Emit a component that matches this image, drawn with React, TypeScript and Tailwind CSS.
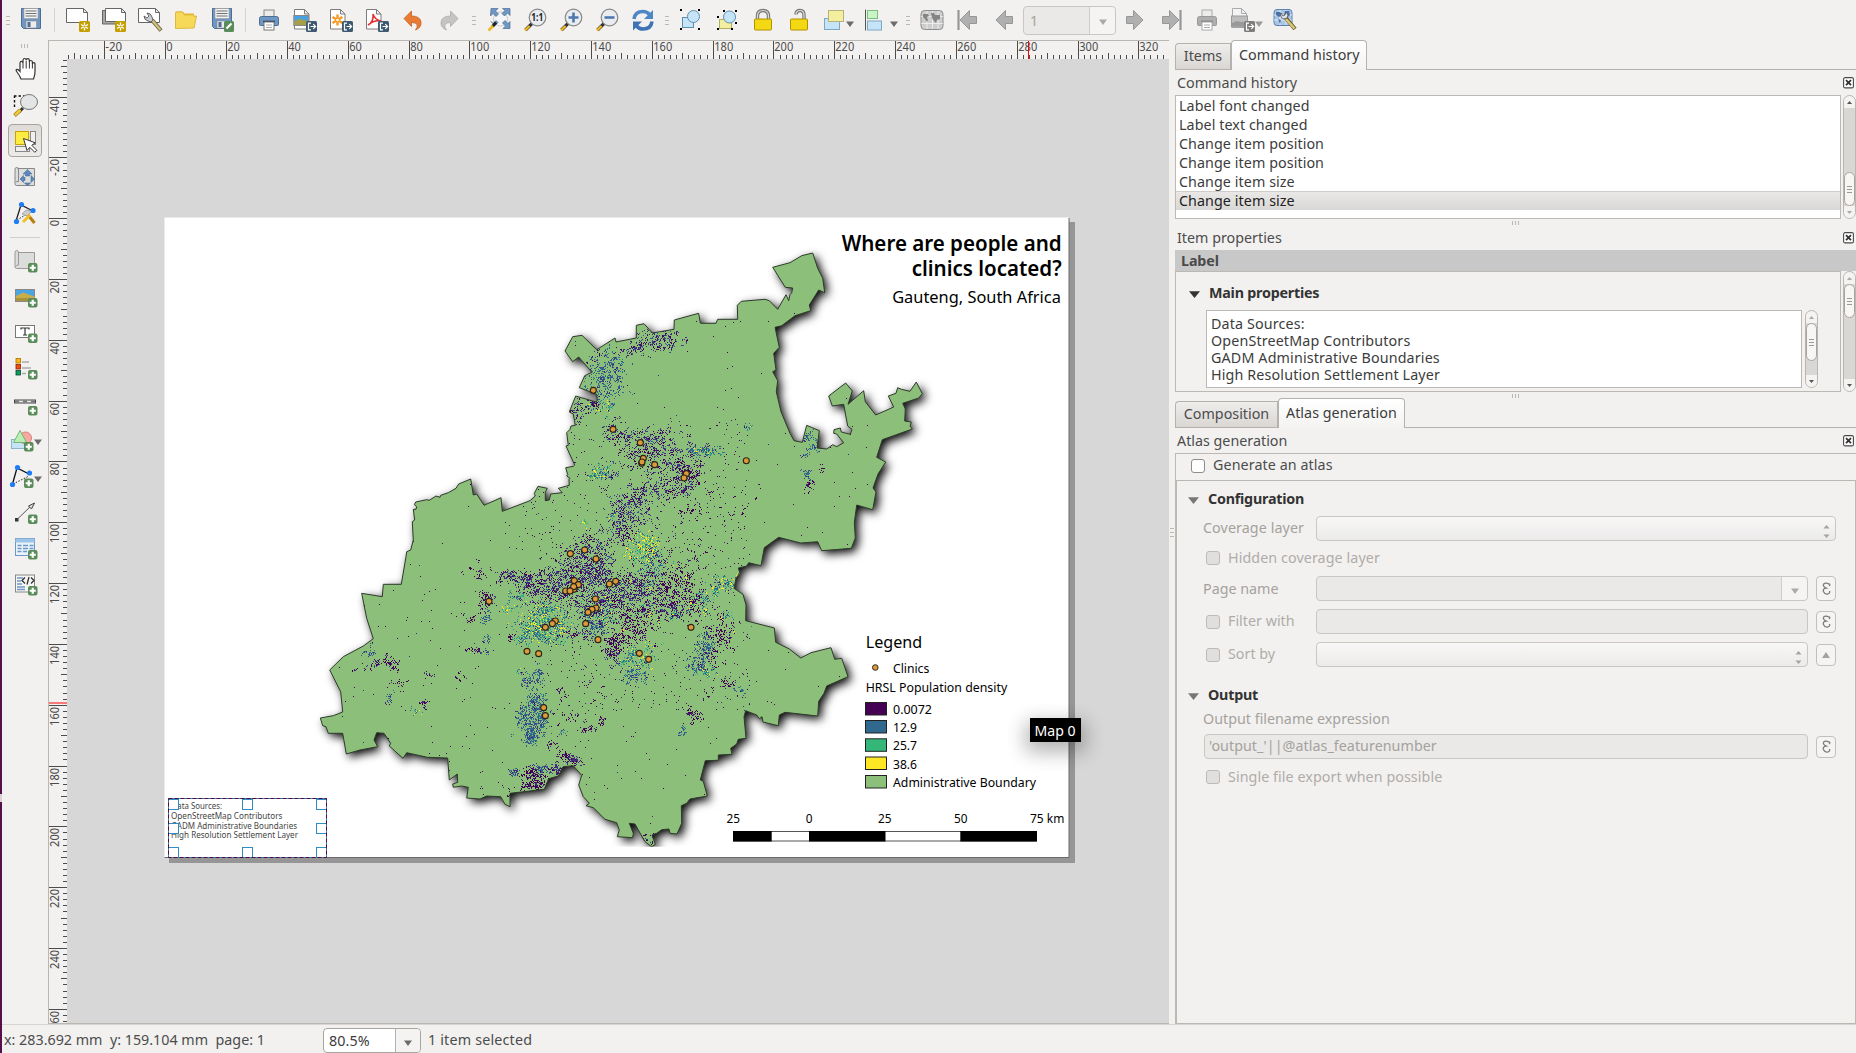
import React from "react";

/* ---------- helpers ---------- */
const pts = (ox: number, oy: number, s: string) =>
  s
    .trim()
    .split(/\s+/)
    .map((p) => {
      const [x, y] = p.split(",").map(Number);
      return `${(ox + x / 3).toFixed(1)},${(oy + y / 3).toFixed(1)}`;
    })
    .join(" ");

const BOUNDARY = [
  pts(310, 240, "302,930 310,900 307,845 314,840 310,808 318,808 320,800 313,794 317,786 350,779 358,781 378,768 390,772 392,766 415,758 438,745 446,732 482,717 490,765 500,762 522,796 573,773 577,814 660,782 676,768 673,760 684,739 712,745 706,757 706,782 718,780 722,762 757,758 745,745 778,736 777,718 780,715 770,708 773,704 767,683 790,679 794,675 768,618 775,616 770,578 780,568 783,558 796,556 790,522 778,516 797,468 858,486 862,482 860,463 808,443 824,407 846,397 806,351 788,365 765,333 788,290 816,286 860,329 915,294 918,306 979,294 979,256 1002,251 1027,279 1092,268 1093,240 1166,220 1171,249"),
  pts(680, 220, "62,310 108,310 113,298 173,298 172,256 184,244 255,238 268,242 293,268 318,224 326,242 330,224 335,218 338,204 316,202 278,142 330,128 365,107 398,99 413,145 428,175 434,218 416,210 388,255 392,272 345,287 305,317 285,322 298,382 281,400 288,450 278,455 293,482 289,515 303,575 330,640 342,662 367,667 380,616 418,632 411,684 440,687 458,674 470,680 491,668 470,642 461,640 462,629 481,624 484,636 511,643 516,628 503,618 491,553 457,558 446,528 497,489 517,513 504,553 551,512 556,545 587,585 641,561 625,528 648,520 653,503 664,508 690,514 709,486 727,521 716,534 668,550 676,567 674,603 694,606 690,618 697,627 607,659 590,712 617,726 594,762 579,804 588,816 578,869 530,855 523,908 526,954 514,985 425,992 413,965 362,969 296,952 253,983 243,1037 206,1028 200,1038 175,1044"),
  pts(660, 540, "235,84 240,100 228,115 222,145 249,163 258,195 257,242 343,264 347,307 388,327 422,354 453,338 513,323 524,358 545,355 564,410 500,438 492,460 476,484 473,528 375,517 358,525 355,557 309,546 306,530 298,536 290,525 257,512 252,530 258,595 235,598 230,612 212,625 216,643 175,645 175,661 136,662 121,720 130,724 142,768 90,777 80,790 64,797 65,850 51,882 30,880 27,867 5,869"),
  pts(310, 540, "1040,880 1026,885 1036,913 1025,920 1005,905 985,870 975,852 958,850 970,880 968,893 922,890 928,870 920,848 885,838 850,803 828,797 838,790 820,770 806,735 815,706 790,677 760,680 745,708 716,716 703,748 600,760 600,800 585,793 572,770 530,768 510,777 470,774 475,742 455,738 430,742 428,732 443,727 442,702 418,720 413,654 352,652 290,638 279,655 238,618 242,610 222,580 200,578 192,600 203,620 150,630 109,642 98,580 55,580 48,560 38,557 31,534 70,527 98,516 92,455 59,390 100,350 160,318 190,296 170,235 155,160 217,170 220,133 274,133 288,50 290,35"),
].join(" ");

const CLINICS: [number, number][] = [
  ...([[850, 451], [909, 568], [991, 608], [1000, 655], [995, 670], [996, 666], [1034, 674], [1129, 701], [1122, 714]].map(([x, y]) => [310 + x / 3, 240 + y / 3]) as [number, number][]),
  [746.3, 460.7],
  ...([[781, 41], [824, 30], [858, 57], [793, 122], [805, 134], [792, 148], [767, 153], [791, 140], [780, 153], [917, 124], [898, 132], [856, 177], [858, 204], [846, 208], [834, 217], [827, 251], [864, 299], [736, 243], [727, 251], [706, 262], [651, 334], [686, 341], [537, 184], [988, 340], [1016, 358], [701, 503], [706, 527], [1143, 262]].map(([x, y]) => [310 + x / 3, 540 + y / 3]) as [number, number][]),
];

const COLORS = ["#440154", "#46287c", "#3b528b", "#2c728e", "#21918c", "#35b779", "#fde725"];
const MIX: Record<string, number[]> = {
  P: [0, 0, 0, 0, 1],
  Q: [0, 0, 1, 1, 1, 2],
  B: [1, 2, 2, 3, 3],
  T: [2, 2, 3, 3, 4, 4, 5, 6],
  Y: [3, 4, 5, 5, 6, 6, 6],
};
/* centre x, centre y, radius x, radius y, cell count, palette */
const CLUSTERS: [number, number, number, number, number, string][] = [
  [661, 340, 17, 9, 190, "Q"], [628, 351, 9, 4, 40, "Q"], [635, 347, 8, 3, 40, "Q"], [600, 374, 14, 18, 180, "B"], [612, 376, 12, 20, 170, "B"], [602, 404, 10, 8, 60, "T"],
  [578, 410, 8, 10, 60, "Q"], [592, 404, 5, 6, 40, "P"], [592, 355, 10, 6, 12, "P"], [612, 430, 8, 9, 60, "Q"], [630, 437, 13, 7, 80, "Q"], [655, 440, 16, 10, 130, "Q"],
  [640, 455, 20, 12, 110, "P"], [665, 458, 22, 15, 160, "Q"], [680, 474, 20, 14, 190, "Q"], [672, 490, 18, 6, 110, "Q"], [690, 468, 8, 12, 60, "P"],
  [699, 450, 17, 4, 90, "B"], [707, 451, 11, 6, 40, "T"], [602, 471, 9, 5, 60, "T"], [594, 475, 7, 3, 30, "T"], [613, 475, 6, 4, 30, "Q"],
  [622, 506, 12, 12, 140, "Q"], [640, 498, 14, 13, 150, "Q"], [635, 520, 16, 8, 70, "Q"], [615, 532, 8, 12, 80, "Q"], [627, 535, 7, 9, 40, "P"],
  [646, 542, 9, 8, 110, "Y"], [640, 552, 12, 9, 110, "Y"], [583, 545, 4, 6, 30, "Q"], [584, 523, 3, 3, 12, "Y"], [611, 515, 4, 3, 14, "T"],
  [585, 560, 16, 18, 220, "Q"], [565, 578, 22, 16, 300, "Q"], [545, 590, 20, 13, 220, "Q"], [595, 578, 22, 16, 320, "Q"], [598, 562, 12, 20, 120, "Q"],
  [615, 592, 22, 16, 260, "Q"], [635, 590, 22, 15, 240, "Q"], [650, 565, 10, 15, 140, "B"], [655, 590, 22, 18, 160, "P"], [675, 580, 20, 14, 140, "P"],
  [668, 608, 20, 9, 180, "Q"], [690, 600, 16, 16, 140, "P"], [585, 605, 18, 12, 150, "Q"], [600, 612, 16, 12, 140, "Q"], [640, 620, 20, 14, 110, "P"],
  [508, 575, 9, 5, 60, "Q"], [521, 578, 8, 4, 50, "Q"], [530, 583, 12, 9, 90, "Q"], [634, 632, 8, 6, 50, "P"], [625, 618, 12, 8, 60, "P"],
  [530, 628, 14, 11, 210, "T"], [545, 620, 14, 11, 180, "T"], [556, 628, 12, 12, 130, "T"], [540, 635, 18, 6, 90, "T"], [545, 608, 12, 4, 40, "T"],
  [515, 598, 8, 6, 35, "T"], [508, 608, 8, 3, 22, "Y"], [595, 628, 10, 6, 80, "B"], [582, 634, 18, 5, 80, "Q"], [598, 615, 12, 5, 50, "T"],
  [615, 645, 8, 9, 90, "P"], [612, 655, 6, 8, 60, "Q"], [620, 640, 8, 6, 40, "P"], [630, 660, 8, 10, 90, "T"], [634, 674, 11, 7, 90, "B"], [643, 658, 8, 6, 40, "T"], [650, 648, 4, 4, 14, "Y"],
  [704, 645, 7, 8, 80, "B"], [696, 664, 7, 8, 70, "B"], [706, 672, 7, 5, 50, "T"], [704, 655, 6, 9, 40, "B"], [717, 627, 12, 9, 70, "P"], [724, 640, 7, 6, 50, "P"], [713, 655, 8, 10, 36, "P"],
  [725, 583, 9, 6, 80, "T"], [715, 590, 5, 5, 36, "T"], [704, 597, 8, 4, 36, "T"], [705, 608, 4, 4, 16, "T"], [673, 617, 4, 4, 20, "T"], [726, 615, 5, 4, 14, "T"],
  [728, 685, 6, 3, 26, "P"], [738, 690, 5, 3, 14, "B"], [690, 711, 4, 4, 26, "P"], [697, 718, 4, 5, 26, "P"], [707, 694, 5, 3, 10, "P"],
  [681, 730, 4, 4, 22, "B"], [535, 700, 7, 7, 110, "B"], [527, 715, 7, 11, 130, "B"], [541, 718, 7, 12, 150, "B"], [531, 736, 6, 6, 110, "B"], [530, 724, 11, 9, 90, "B"],
  [531, 680, 8, 5, 60, "B"], [538, 675, 4, 8, 30, "B"], [522, 672, 4, 3, 12, "T"], [485, 602, 5, 8, 60, "P"], [489, 598, 4, 4, 26, "Q"],
  [487, 617, 4, 8, 34, "B"], [487, 639, 4, 2, 16, "B"], [370, 653, 5, 4, 26, "B"], [373, 663, 5, 3, 28, "Q"], [388, 658, 4, 6, 24, "P"], [393, 665, 5, 4, 26, "P"], [359, 669, 4, 2, 8, "P"],
  [388, 697, 4, 5, 18, "B"], [424, 703, 3, 5, 26, "P"], [416, 711, 4, 3, 14, "T"], [510, 637, 3, 3, 18, "P"], [473, 650, 5, 3, 20, "P"], [484, 651, 5, 2, 12, "B"],
  [428, 673, 6, 3, 10, "Q"], [398, 684, 7, 4, 14, "P"], [468, 618, 8, 4, 16, "P"], [480, 574, 6, 5, 20, "P"], [472, 566, 8, 5, 10, "P"], [460, 675, 8, 4, 12, "P"],
  [532, 774, 8, 7, 110, "P"], [533, 784, 9, 5, 110, "P"], [514, 772, 4, 3, 36, "B"], [541, 768, 5, 4, 44, "B"], [556, 768, 5, 5, 60, "Q"], [564, 755, 6, 5, 50, "P"], [552, 745, 4, 3, 16, "P"],
  [575, 760, 5, 4, 56, "Q"], [588, 728, 6, 4, 32, "P"], [600, 722, 4, 3, 16, "P"], [564, 731, 3, 3, 10, "B"], [559, 693, 4, 4, 16, "P"], [648, 837, 8, 5, 24, "P"],
  [808, 436, 5, 4, 34, "B"], [813, 446, 4, 4, 28, "B"], [803, 454, 4, 2, 12, "B"], [806, 473, 3, 4, 28, "B"], [810, 484, 6, 4, 28, "P"], [822, 470, 4, 2, 6, "P"],
  [746, 427, 4, 3, 12, "T"], [640, 610, 80, 40, 100, "Y"], [540, 790, 40, 7, 50, "P"], [560, 712, 22, 18, 30, "P"], [595, 690, 14, 16, 20, "P"], [686, 510, 8, 5, 20, "P"], [710, 510, 30, 18, 60, "P"], [670, 556, 40, 14, 70, "P"],
];
const cells = (() => {
  let seed = 20117;
  const rnd = () => {
    seed = (seed * 1664525 + 1013904223) >>> 0;
    return seed / 4294967296;
  };
  const gauss = () => (rnd() + rnd() + rnd() - 1.5) * 1.3;
  const out = COLORS.map(() => "");
  const put = (x: number, y: number, c: number) => {
    out[c] += `M${Math.round(x)} ${Math.round(y)}h1v1h-1z`;
  };
  for (const [cx, cy, rx, ry, n, mix] of CLUSTERS) {
    const m = MIX[mix];
    let left = Math.round(n * 1.45);
    while (left > 0) {
      let x = cx + gauss() * rx;
      let y = cy + gauss() * ry;
      const run = 1 + Math.floor(rnd() * 4);
      const c = m[Math.floor(rnd() * m.length)];
      for (let k = 0; k < run; k++) {
        put(x, y, rnd() < 0.6 ? c : m[Math.floor(rnd() * m.length)]);
        x += Math.round(rnd() * 4 - 2);
        y += Math.round(rnd() * 4 - 2);
      }
      left -= run;
    }
  }
  for (let i = 0; i < 700; i++) put(330 + rnd() * 540, 310 + rnd() * 520, rnd() < 0.9 ? 0 : 1);
  for (let i = 0; i < 900; i++) put(520 + rnd() * 230, 420 + rnd() * 290, rnd() < 0.8 ? 0 : 1);
  return out;
})();

/* ---------- rulers ---------- */
const MM = 3.0407;
const HRuler = () => {
  const ticks: React.ReactNode[] = [];
  for (let v = -32; v <= 328; v += 2) {
    const x = Math.round(165.3 + v * MM) - 49 + 0.5;
    if (x < 18 || x > 1119) continue;
    const major = v % 20 === 0;
    ticks.push(<path key={v} d={`M${x} ${major ? 0 : v % 10 === 0 ? 12 : 14}V18`} stroke="#4c4c4c" />);
    if (major)
      ticks.push(
        <text key={"t" + v} x={x + 0.8} y={10.2} fontSize="12" fill="#4c4c4c" textLength={String(v).length * 6.3 - (v < 0 ? 2 : 0)} lengthAdjust="spacingAndGlyphs">
          {v}
        </text>
      );
  }
  return (
    <svg className="block h-[18px] w-[1119px] shrink-0 overflow-visible" viewBox="0 0 1119 18">
      {ticks}
      <path d="M979.5 0V18" stroke="#f00" />
    </svg>
  );
};
const VRuler = () => {
  const ticks: React.ReactNode[] = [];
  for (let v = -52; v <= 264; v += 2) {
    const y = Math.round(218.2 + v * MM) - 59 + 0.5;
    if (y < -2 || y > 964) continue;
    const major = v % 20 === 0;
    ticks.push(<path key={v} d={`M${major ? 0 : v % 10 === 0 ? 12 : 14} ${y}H18`} stroke="#4c4c4c" />);
    if (major)
      ticks.push(
        <text key={"t" + v} transform={`translate(10 ${y + 1.5}) rotate(-90)`} textAnchor="end" fontSize="12" fill="#4c4c4c" textLength={String(v).length * 6.3 - (v < 0 ? 2 : 0)} lengthAdjust="spacingAndGlyphs">
          {v}
        </text>
      );
  }
  return (
    <svg className="block h-[964px] w-[18px] shrink-0 overflow-hidden" viewBox="0 0 18 964">
      {ticks}
      <path d="M0 644H18" stroke="#f00" />
    </svg>
  );
};

/* ---------- composition canvas ---------- */
const T = ({ x, y, w, s, children, weight = 400, fill = "#000" }: { x: number; y: number; w: number; s: number; children: string; weight?: number; fill?: string }) => (
  <text x={x} y={y} fontSize={s} textLength={w} lengthAdjust="spacingAndGlyphs" fontWeight={weight} fill={fill}>
    {children}
  </text>
);
const LEGEND: [number, string, string, number][] = [
  [702.5, "#440154", "0.0072", 39],
  [720.5, "#31688e", "12.9", 24],
  [738.8, "#35b779", "25.7", 24],
  [757, "#fde725", "38.6", 24],
  [775.5, "#8cc07a", "Administrative Boundary", 143],
];
const Canvas = () => (
  <svg className="block h-[964px] w-[1102px] bg-[#d7d7d7]" viewBox="67 59 1102 964">
    <defs>
      <clipPath id="mapframe"><rect x="165" y="218" width="904" height="628.7" /></clipPath>
      <clipPath id="land"><polygon points={BOUNDARY} /></clipPath>
      <filter id="shadow" x="-10%" y="-10%" width="120%" height="120%" colorInterpolationFilters="sRGB">
        <feDropShadow dx="3.5" dy="3.5" stdDeviation="5" floodColor="#000" floodOpacity="1" />
      </filter>
      <filter id="tip" x="-60%" y="-60%" width="220%" height="320%"><feGaussianBlur stdDeviation="10" /></filter>
    </defs>
    <rect x="169" y="222" width="906" height="641" fill="#969696" />
    <rect x="164.5" y="217.5" width="904.5" height="640" fill="#fff" />
    <path d="M164.5 857.5H1069V218" fill="none" stroke="#6a6a6a" />
    <g clipPath="url(#mapframe)">
      <polygon points={BOUNDARY} fill="#8cc07a" filter="url(#shadow)" />
      <g clipPath="url(#land)" shapeRendering="crispEdges">
        {cells.map((d, i) => <path key={i} d={d} fill={COLORS[i]} />)}
      </g>
      <polygon points={BOUNDARY} fill="none" stroke="#2f3a2c" strokeWidth="1" strokeLinejoin="round" />
      {CLINICS.map(([x, y], i) => <circle key={i} cx={x} cy={y} r="3" fill="#dc9a3c" stroke="#2b2417" strokeWidth="1.1" />)}
    </g>
    <T x={841.7} y={250.5} w={220} s={21} weight={600}>Where are people and</T>
    <T x={911.7} y={275.7} w={150} s={21} weight={600}>clinics located?</T>
    <T x={892.2} y={303} w={168.7} s={16.5}>Gauteng, South Africa</T>
    <T x={865.7} y={648.3} w={56.5} s={17}>Legend</T>
    <circle cx="875.3" cy="667.5" r="2.8" fill="#dc9a3c" stroke="#2b2417" />
    <T x={893} y={673.3} w={36.3} s={12.6}>Clinics</T>
    <T x={865.7} y={692.3} w={141.5} s={12.6}>HRSL Population density</T>
    {LEGEND.map(([y, c, label, w]) => (
      <g key={label}>
        <rect x="865.5" y={y} width="21" height="12.5" fill={c} stroke="#222" />
        <T x={893} y={y + 11.5} w={w} s={12.6}>{label}</T>
      </g>
    ))}
    <T x={726.5} y={823} w={13.5} s={12.6}>25</T>
    <T x={805.7} y={823} w={6.8} s={12.6}>0</T>
    <T x={878} y={823} w={13.5} s={12.6}>25</T>
    <T x={954} y={823} w={13.5} s={12.6}>50</T>
    <T x={1030} y={823} w={34.3} s={12.6}>75 km</T>
    <rect x="733.5" y="831.5" width="303" height="9.5" fill="#fff" stroke="#555" />
    <path d="M733 831h38.7v10.5H733zM809 831h76.5v10.5H809zM960.3 831H1037v10.5h-76.7z" fill="#000" />

    <T x={171.5} y={808.7} w={50.5} s={8.8} fill="#444">Data Sources:</T>
    <T x={171} y={819} w={111.5} s={8.8} fill="#444">OpenStreetMap Contributors</T>
    <T x={171} y={828.8} w={126} s={8.8} fill="#444">GADM Administrative Boundaries</T>
    <T x={171} y={838} w={127} s={8.8} fill="#444">High Resolution Settlement Layer</T>
    {[168.5, 242.5, 316.5].map((x) => [799.5, 823.5, 847.5].map((y) => (x === 242.5 && y === 823.5 ? null : (
      <rect key={x + "-" + y} x={x} y={y} width="10" height="10" fill="#fff" stroke="#308cc6" />
    ))))}
    <rect x="168.5" y="798.5" width="158" height="59" fill="none" stroke="#308cc6" />
    <rect x="168.5" y="798.5" width="158" height="59" fill="none" stroke="#5a0838" strokeDasharray="4 2" />

    <rect x="1026" y="722" width="59" height="30" fill="#000" opacity=".3" filter="url(#tip)" />
    <rect x="1030" y="718" width="51" height="24" fill="#000" />
    <T x={1034.5} y={735.5} w={41} s={14.3} fill="#fff">Map 0</T>
  </svg>
);

/* ---------- icons ---------- */
const S = ({ children, w = 24, h = 24 }: { children: React.ReactNode; w?: number; h?: number }) => (
  <svg width={w} height={h} viewBox={`0 0 ${w} ${h}`} className="block shrink-0 overflow-visible" fill="none">{children}</svg>
);
const Slot = ({ children }: { children: React.ReactNode }) => <div className="flex h-6 w-9 shrink-0 items-center justify-center">{children}</div>;
const Down = ({ c = "#6b6b6b" }: { c?: string }) => <svg width="8" height="6" viewBox="0 0 8 6" className="block shrink-0"><path d="M0 .5h8L4 6z" fill={c} /></svg>;
const Sep = () => <div className="flex h-6 w-[11px] shrink-0 justify-center"><div className="w-px bg-[#d6d3d0]" /></div>;
const Grip = ({ w }: { w: "a" | "b" | "c" }) => (
  <div className={`flex h-6 shrink-0 flex-col items-center justify-center gap-[3px] ${w === "a" ? "w-[14px]" : w === "b" ? "w-3" : "w-[13px]"}`}>
    <i className="h-px w-[4px] bg-[#bbb8b4]" /><i className="h-px w-[4px] bg-[#bbb8b4]" /><i className="h-px w-[4px] bg-[#bbb8b4]" />
  </div>
);
const Star = () => (
  <g><rect x="13" y="13" width="11" height="11" rx="1.5" fill="#c3a000" /><path d="M18.5 14.5v8M15 16.5l7 4M22 16.5l-7 4" stroke="#fff" strokeWidth="1.3" /><circle cx="18.5" cy="18.5" r="1" fill="#c3a000" /></g>
);
const Out = ({ c = "#3d5a70" }: { c?: string }) => (
  <g><rect x="13" y="13" width="11" height="11" rx="1.5" fill={c} /><path d="M18 15.2h-2.5v6.6H18M17.5 18.5h5M20.3 16.2l2.3 2.3-2.3 2.3" stroke="#fff" strokeWidth="1.2" /></g>
);
const Plus = ({ x = 12, y = 12 }: { x?: number; y?: number }) => (
  <g transform={`translate(${x} ${y})`}><rect width="9.5" height="9.5" rx="2" fill="#5a8c5a" /><path d="M4.75 1.7v6.1M1.7 4.75h6.1" stroke="#fff" strokeWidth="2.2" /></g>
);
const Floppy = () => (
  <g><path d="M2.5 1.5h19v20h-17l-2-2z" fill="#6f97c4" stroke="#4d6d93" /><rect x="5" y="1.5" width="14" height="10" fill="#f2f2f2" stroke="#999" strokeWidth=".6" /><path d="M6.5 4h11M6.5 6.500h11M6.500 9h11" stroke="#6f6f6f" /><rect x="7" y="14" width="10.500" height="7" fill="#ececec" stroke="#888" strokeWidth=".6" /><rect x="8.500" y="15" width="3" height="5" fill="#4d6d93" /></g>
);
const PageI = () => <path d="M1.500 1.500h10l4.500 4.500v15H1.500zM11.500 1.500v4.500H16" fill="#fff" stroke="#7c7c7c" />;
const Printer = ({ g = false }) => (
  <g><rect x="7" y="2" width="10" height="9" fill="#ececec" stroke={g ? "#aaa" : "#8a8a8a"} /><path d="M2.500 10.500q0-2 2-2h15q2 0 2 2v6q0 1-1 1h-17q-1 0-1-1z" fill={g ? "#aeaeae" : "#6f97c4"} stroke={g ? "#999" : "#4d6d93"} /><path d="M6 13.500h12" stroke={g ? "#777" : "#2b3f58"} strokeWidth="1.600" /><rect x="7" y="14" width="10" height="8" fill="#fff" stroke={g ? "#aaa" : "#777"} /><path d="M9 17h6M9 19.500h6" stroke="#aaa" strokeWidth="1" /></g>
);
const Mag = ({ children }: { children?: React.ReactNode }) => (
  <g><path d="M9 15.500l-6.500 6.500" stroke="#333" strokeWidth="3.200" /><path d="M6.500 18l-4.500 4.500" stroke="#f0b920" strokeWidth="2.400" /><circle cx="14.500" cy="9.500" r="8.300" fill="#e9edf0" stroke="#888" strokeWidth="1.200" />{children}</g>
);
const Corners = () => <g fill="#000">{[[1, 1], [19, 1], [1, 20], [19, 20]].map(([x, y], i) => <rect key={i} x={x} y={y} width="2" height="2" />)}</g>;
const LockB = ({ open = false }) => (
  <g><path d={open ? "M9 6.500q0-4 4-4t4 4.500v6" : "M6.500 13V8q0-5.500 5.500-5.500T17.500 8v5"} stroke="#777" strokeWidth="3.400" /><path d={open ? "M9 6.500q0-4 4-4t4 4.500v6" : "M6.500 13V8q0-5.500 5.500-5.500T17.500 8v5"} stroke="#ddd" strokeWidth="1.200" /><rect x="3.500" y="11" width="17" height="11" rx="1" fill="#f2d914" stroke="#b39200" /></g>
);
const Arr = ({ dir, bar = false }: { dir: 1 | -1; bar?: boolean }) => (
  <g transform={dir === 1 ? "" : "translate(24 0) scale(-1 1)"}><path d="M3.500 8.500h7V2.500l9.500 9.500-9.500 9.500V15.500h-7z" fill="#b0b0b0" stroke="#979797" />{bar && <path d="M21.500 2v20" stroke="#979797" strokeWidth="2.200" />}</g>
);
const GridI = () => (
  <g><rect x="1" y="2.500" width="22" height="19" rx="3.500" fill="#cdcdcd" stroke="#8d8d8d" /><path d="M1 8.500h22M1 15.500h22M7 3v18M12.500 3v18M18 3v18" stroke="#fff" opacity=".6" /><path d="M3 6h5l1 2-2 1 1 3-1 2-2-3-2-2zM11 5h3l1 2h5v4l-3 1-1 3-2-2-2-3z" fill="#858585" /></g>
);

const TopBar = () => (
  <div className="flex h-10 shrink-0 items-center pl-[2px]">
    <div className="flex w-[11px] flex-col items-center gap-[3px]"><i className="h-px w-[4px] bg-[#bbb8b4]" /><i className="h-px w-[4px] bg-[#bbb8b4]" /><i className="h-px w-[4px] bg-[#bbb8b4]" /></div>
    <Slot><S><g transform="translate(0 -1)"><Floppy /></g></S></Slot>
    <Sep />
    <Slot><S><path d="M.5.5h17l4 4v10H.5zM17.5.5v4h4" fill="#fff" stroke="#666" /><Star /></S></Slot>
    <Slot><S><path d="M.5 2.500h4v10h13v3.500H.5z" fill="#a9a69f" stroke="#666" /><path d="M3.500.5h16l4 4v9h-20zM19.500.5v4h4" fill="#fff" stroke="#666" /><Star /></S></Slot>
    <Slot><S><path d="M.5.5h17l4 4v10H.5zM17.5.5v4h4" fill="#fff" stroke="#666" /><path d="M14 12l9 10.500" stroke="#66603f" strokeWidth="4" /><path d="M14 12l8.500 10" stroke="#cfc27c" strokeWidth="2.400" /><path d="M6 8q0 4 4 5l3 1 2-2-1-3q-1-4-5-4l2 3-2 2z" fill="#c9cdd1" stroke="#555" strokeWidth=".9" /></S></Slot>
    <Slot><S><path d="M1.500 3.500h7l2 2H20v4H1.500z" fill="#e3b52c" /><path d="M1.500 20.500V5l1-1h6l2 3H20v1.500l2.500-.5L20 20z" fill="#f7d95a" stroke="#e0b93a" /></S></Slot>
    <Slot><S><g transform="translate(0 -1)"><Floppy /></g><rect x="14" y="13" width="10" height="11" rx="1.500" fill="#5a8c5a" /><path d="M16.500 20.500l5-5" stroke="#fff" strokeWidth="2.200" /></S></Slot>
    <Sep />
    <Slot><S><Printer /></S></Slot>
    <Slot><S><PageI /><rect x=".8" y="7.500" width="14.500" height="10" fill="#4aa3e0" stroke="#888" /><path d="M1.300 13l5-2 9 2v4h-14z" fill="#a59f4c" /><Out /></S></Slot>
    <Slot><S><PageI /><path d="M8.500 6.500v11M3.500 9l10 6M13.500 9l-10 6" stroke="#f59a23" strokeWidth="2.400" /><circle cx="8.500" cy="12" r="1.300" fill="#fff" /><Out /></S></Slot>
    <Slot><S><PageI /><path d="M3 17q6-3 5-11 2 6 8 7-7-1-13 4z" stroke="#e03030" strokeWidth="1.500" /><Out /></S></Slot>
    <Slot><S><path d="M3 10.500l7.500-7.500v5q9 0 9.500 6.500.5 5-5.500 7.500 2.500-3 1.500-5.500-1-2-5.500-2v4z" fill="#e97b35" stroke="#c05f1e" strokeWidth=".8" /></S></Slot>
    <Slot><S><path d="M21 10.500l-7.500-7.500v5Q4.500 8 4 14.500q-.5 5 5.500 7.500Q7 19 8 16.500q1-2 5.500-2v4z" fill="#c4c4c4" stroke="#aaa" strokeWidth=".8" /></S></Slot>
    <Grip w="a" />
    <Slot><S><circle cx="13.500" cy="11" r="7" fill="#f4f5f6" stroke="#ccc" /><g fill="#6f97c4" stroke="#4d6d93" strokeWidth=".7"><path d="M4 .5h7L8.500 3l3 3-2.500 2.500-3-3L3.500 8zM23 .5v7l-2.500-2.500-3 3L15 5.500l3-3L15.500.5zM23 20.500h-7l2.500-2.500-3-3 2.500-2.500 3 3 2-2zM4 13.500l2 2 3-3 2 2-3 3z" /></g><path d="M9 14.500l-3.500 4" stroke="#222" strokeWidth="3" /><path d="M6 18l-4.500 4.500" stroke="#f0b920" strokeWidth="2.600" /></S></Slot>
    <Slot><S><Mag><text x="14.300" y="13.300" textAnchor="middle" fontSize="10" fontWeight="700" fill="#222" textLength="12" lengthAdjust="spacingAndGlyphs">1:1</text></Mag></S></Slot>
    <Slot><S><Mag><path d="M14.500 4.500v10M9.500 9.500h10" stroke="#4d79b0" strokeWidth="2.600" /></Mag></S></Slot>
    <Slot><S><Mag><path d="M9.500 9.500h10" stroke="#4d79b0" strokeWidth="2.600" /></Mag></S></Slot>
    <Slot><S><path d="M3 11Q4 3.500 12 3.500q4 0 6.500 3" stroke="#4f86c6" strokeWidth="3.600" /><path d="M22 2v9h-9z" fill="#4f86c6" /><path d="M21 13.500Q20 21 12 21q-4 0-6.500-3" stroke="#3f74b4" strokeWidth="3.600" /><path d="M2 22.500v-9h9z" fill="#3f74b4" /></S></Slot>
    <Grip w="b" />
    <Slot><S><rect x="3.500" y="9.500" width="11" height="10" fill="#c6e4f7" stroke="#5d8fb0" /><circle cx="14.500" cy="8.500" r="6" fill="#c6e4f7" stroke="#5d8fb0" /><Corners /></S></Slot>
    <Slot><S><rect x="4.500" y="11.500" width="12" height="9" fill="#f3ef9e" stroke="#b5b060" /><circle cx="14.500" cy="9" r="6" fill="#c6e4f7" stroke="#5d8fb0" /><g fill="#000"><rect x="8" y="2" width="2" height="2" /><rect x="20" y="2" width="2" height="2" /><rect x="2" y="8" width="2" height="2" /><rect x="20" y="14" width="2" height="2" /><rect x="2" y="20" width="2" height="2" /><rect x="16" y="20" width="2" height="2" /></g></S></Slot>
    <Slot><S><LockB /></S></Slot>
    <Slot><S><LockB open /></S></Slot>
    <div className="flex h-6 w-10 shrink-0 items-center pl-[5px]"><S><rect x="2.500" y="10.500" width="15" height="11" fill="#c6e4f7" stroke="#7da8c4" /><rect x="6.500" y="2.500" width="15" height="11" fill="#f3ef9e" stroke="#b5b27c" /></S><div className="mt-2"><Down /></div></div>
    <div className="flex h-6 w-11 shrink-0 items-center gap-[3px] pl-[6px]"><S><path d="M2.500 1.500v21" stroke="#555" /><rect x="4.500" y="2.500" width="10" height="8" fill="#c8f5c4" stroke="#7dbb82" /><rect x="4.500" y="13" width="14" height="9" fill="#c6e4f7" stroke="#7da8c4" /></S><div className="mt-2"><Down /></div></div>
    <Grip w="c" />
    <Slot><S><GridI /></S></Slot>
    <Slot><S><Arr dir={-1} bar /></S></Slot>
    <Slot><S><Arr dir={-1} /></S></Slot>
    <div className="ml-[1px] flex h-[29px] w-[93px] shrink-0 rounded border border-[#c9c6c3] bg-[#eae9e7]">
      <div className="flex-1 pl-[6px] pt-[4px] leading-5 text-[#a9a29c]">1</div>
      <div className="flex w-[26px] items-center justify-center rounded-r border-l border-[#cfccc9] bg-[#f5f4f3] pt-1"><Down c="#aaa" /></div>
    </div>
    <div className="ml-[1px]"><Slot><S><Arr dir={1} /></S></Slot></div>
    <Slot><S><Arr dir={1} bar /></S></Slot>
    <Slot><S><Printer g /></S></Slot>
    <div className="flex h-6 w-[42px] shrink-0 items-center pl-[6px]"><S><path d="M1.500.5h9l5 5v14h-14zM10.500.5v5h5" fill="#f4f4f4" stroke="#aaa" /><rect x=".5" y="8" width="16" height="11" fill="#bdbdbd" stroke="#999" /><path d="M1 15l5-2 10 2v3.500H1z" fill="#999" /><Out c="#7d7d7d" /></S><div className="mt-2"><Down c="#999" /></div></div>
    <Slot><S><rect x="1" y="1.500" width="18" height="16" rx="3" fill="#a9c5e6" stroke="#5b82b3" /><path d="M1 7h18M1 12h18M7 2v15M13 2v15" stroke="#fff" opacity=".7" /><path d="M3 4h4l2 3-3 2-3-2zM12 3h4l1 4-3 3-3-3zM5 11l3 1-1 4z" fill="#4b72a4" /><path d="M12 9l10 12" stroke="#66603f" strokeWidth="4" /><path d="M13 11l8.500 9.500" stroke="#e0cb6c" strokeWidth="2.400" /><path d="M8 5q-1 5 3 6l3-1 1-3-2-3-1 3-2 1z" fill="#e3e6e9" stroke="#555" strokeWidth=".8" /></S></Slot>
  </div>
);

const Cell = ({ children }: { children: React.ReactNode }) => <div className="flex h-9 w-full shrink-0 items-center pl-[11px]">{children}</div>;
const Pt = ({ x, y }: { x: number; y: number }) => <circle cx={x} cy={y} r="2.600" fill="#1f7cf2" />;
const SideBar = () => (
  <div className="flex w-[46px] shrink-0 flex-col">
    <div className="flex h-[11px] items-center justify-center gap-[2px] pr-[1px]"><i className="h-1 w-px bg-[#bbb8b4]" /><i className="h-1 w-px bg-[#bbb8b4]" /><i className="h-1 w-px bg-[#bbb8b4]" /></div>
    <Cell><S><g transform="translate(0 -.5)"><path d="M8 22.500Q7 19.500 4 15.500q-1.500-2-.5-2.500 1.500-.7 3.500 2V6.500q.2-1.700 1.500-1.700T10 6.500V3.700Q10.200 2 11.600 2T13.200 3.700q.2-1.500 1.600-1.500t1.600 1.700v1.600q.2-1.500 1.500-1.500t1.500 1.500v2q.2-1.300 1.400-1.300T22 7.500V15q0 4-1.500 7.500z" fill="#fff" stroke="#333" strokeWidth="1.200" /><path d="M10 6.500V12M13.200 4.500V12M16.400 5v7M19.400 7v5" stroke="#333" /></g></S></Cell>
    <Cell><S w={26}><path d="M1 3h12M1.500 2.500v12" stroke="#111" strokeWidth="1.400" strokeDasharray="2.500 2" /><path d="M10 15l-4 4" stroke="#333" strokeWidth="3" /><path d="M7.500 17l-6 5.500" stroke="#a5801a" strokeWidth="3.800" /><path d="M7.500 17L2 22" stroke="#f0c93a" strokeWidth="2.400" /><ellipse cx="16" cy="9" rx="8.500" ry="7.500" fill="#e2e4e5" stroke="#777" /></S></Cell>
    <div className="flex h-9 shrink-0 items-center pb-[1px] pl-[6px]">
      <div className="flex h-[33px] w-[34px] items-center justify-center rounded border border-[#a7a39f] bg-gradient-to-b from-[#dedbd8] to-[#edebe9]"><S><rect x="2.500" y="2.500" width="13" height="13" fill="#ffec42" stroke="#c9a400" /><rect x="17.500" y="2.500" width="5" height="13" fill="#f0f0ef" stroke="#888" /><rect x="2.500" y="17.500" width="14" height="5" fill="#f0f0ef" stroke="#888" /><path d="M10.500 9.500l3.500 12 2.800-3.200 5 5 2-2-5-5 3.500-2.500z" fill="#fff" stroke="#333" /></S></div>
    </div>
    <Cell><S><path d="M4.500 3.500h17v17H3.500Q2 20.500 2 18.500V4q0-1.500 1.700-1.500T5.500 4v12.500q-2-.5-3 1" fill="#ddd" stroke="#888" /><g fill="#5b88bd" stroke="#3c618e" strokeWidth=".5"><path d="M14.500 4.500l4.500 4.500h-2.500v2h-4V9H10zM14.500 21l-3-3h6zM7 14l3.500-3.500v2h1.500v3h-1.500v2zM21.500 14L18 10.500v7z" /></g></S></Cell>
    <Cell><S><path d="M3 20L8 4l12 6" stroke="#222" strokeWidth="1.300" /><path d="M4 19l15-9" stroke="#222" strokeDasharray="1.500 1.500" /><path d="M9 13l4-4 6 1-5 5z" fill="#ccc" stroke="#888" strokeWidth=".6" /><path d="M15 14l6.500 8" stroke="#b87f10" strokeWidth="3" /><path d="M10 21l7-7" stroke="#f0c020" strokeWidth="2.800" /><Pt x={8.500} y={3.500} /><Pt x={20} y={9.500} /><Pt x={3.500} y={20.500} /></S></Cell>
    <div className="flex h-3 items-center pl-2"><div className="h-px w-[30px] bg-[#d0cdca]" /></div>
    <Cell><S><path d="M5 3.500h16.500v16H3.500Q2 19.500 2 17.500V3.500q0-2 1.700-2T5.500 3.500V16q-2 0-3 1.500" fill="#dcdcdb" stroke="#999" /><Plus x={15} y={14} /></S></Cell>
    <Cell><S><rect x="2.500" y="4.500" width="19" height="12" fill="#4ba4e4" stroke="#888" /><path d="M3 11l7-3.500 11.500 4v4.500H3z" fill="#c9ad4a" /><path d="M3 13h18.500v3H3z" fill="#a8923a" /><Plus x={15} y={13} /></S></Cell>
    <Cell><S><rect x="2.500" y="4.500" width="19" height="12" fill="#fff" stroke="#777" /><path d="M8 8.500V7h8v1.500M12 7v7M10 14h4" stroke="#333" strokeWidth="1.200" /><Plus x={15} y={12.500} /></S></Cell>
    <Cell><S><g strokeWidth=".8"><rect x="3" y="1.500" width="4.500" height="4.500" fill="#fdb813" stroke="#b26e00" /><rect x="3" y="7.500" width="4.500" height="4.500" fill="#f04a10" stroke="#8c2200" /><rect x="3" y="13.500" width="4.500" height="4.500" fill="#10a050" stroke="#044" /></g><path d="M9 5h7M9 11h9M9 16.500h4" stroke="#aaa" strokeWidth="1.400" /><Plus x={15} y={13} /></S></Cell>
    <Cell><S><rect x="1.500" y="7" width="21" height="3" fill="#e8e8e8" stroke="#444" /><path d="M2 8.500h4M10 8.500h4M18 8.500h4" stroke="#777" strokeWidth="2" /><Plus x={15} y={13} /></S></Cell>
    <Cell><div className="-ml-[2px] flex items-center"><S w={23}><rect x=".5" y="10.500" width="14" height="9" fill="#c6e4f7" stroke="#8ab4d0" /><circle cx="14.500" cy="9" r="6" fill="#f5a9a0" stroke="#d98078" /><path d="M9 1.500l6.500 12H2.500z" fill="#b8f0b4" stroke="#77b377" /><Plus x={13} y={13} /></S><div className="mt-[2px]"><Down /></div></div></Cell>
    <Cell><div className="-ml-[3px] flex items-center"><S w={23}><path d="M2.500 19L7 3l13 6.500" stroke="#111" strokeWidth="1.300" /><path d="M3 19l16-8" stroke="#222" strokeDasharray="1.500 1.500" /><Pt x={7.500} y={2.500} /><Pt x={19.500} y={8} /><Pt x={2.500} y={19.500} /><Plus x={14} y={13.500} /></S><div className="ml-px mt-[4px]"><Down /></div></div></Cell>
    <Cell><S><rect x="2" y="17" width="3.500" height="3.500" fill="#333" /><path d="M4 18.500L19 4" stroke="#555" /><path d="M21.500 2l-3 6-3-3z" fill="#ddd" stroke="#444" /><Plus x={15} y={13.500} /></S></Cell>
    <Cell><S><rect x="2.500" y="1.500" width="19" height="17" fill="#eaf3fb" stroke="#6f97c4" /><path d="M2.500 3.500h19" stroke="#9cc3e8" strokeWidth="4" /><path d="M4.500 8.500h4M10 8.500h5M16.500 8.500h4M4.500 11.500h4M10 11.500h5M16.500 11.500h4M4.500 14.500h4M10 14.500h4" stroke="#6f97c4" strokeWidth="1.400" /><Plus x={15} y={13} /></S></Cell>
    <Cell><S><rect x="2.500" y="2" width="19" height="17" fill="#f5f5f4" stroke="#888" /><path d="M4 5h6M4 8h4M4 11h5M4 14h8M4 16.500h8" stroke="#6f97c4" strokeWidth="1.600" /><path d="M12 4.500L9 7.500l3 3M16 4l-2 7.500M18 4.500l3 3-3 3" stroke="#333" strokeWidth="1.300" /><Plus x={15} y={13} /></S></Cell>
  </div>
);

/* ---------- right panel ---------- */
const Close = () => (
  <svg width="11" height="12" viewBox="0 0 11 12" className="block"><rect x=".6" y=".6" width="9.800" height="10.300" rx="1.500" fill="#fff" stroke="#4a4a4a" strokeWidth="1.100" /><path d="M3 3.200l5 5M8 3.200l-5 5" stroke="#333" strokeWidth="1.800" /></svg>
);
const Title = ({ children, h }: { children: string; h: string }) => (
  <div className={`flex shrink-0 justify-between pl-[2px] pr-[2px] text-[#4c4c4c] ${h}`}><span className="leading-[20px]">{children}</span><div className="pt-[4px]"><Close /></div></div>
);
const Tabs = ({ a, b, wa, wb }: { a: string; b: string; wa: string; wb: string }) => (
  <div className="flex h-[30px] shrink-0 items-end border-b border-[#b5b2ae] text-[#4c4c4c]">
    <div className={`flex h-[26px] items-center justify-center rounded-tl border border-b-0 border-[#b5b2ae] bg-gradient-to-b from-[#efeeec] to-[#d9d6d3] pb-[2px] ${wa}`}>{a}</div>
    <div className={`-mb-px flex h-[30px] items-center rounded-t border border-b-0 border-[#b5b2ae] bg-gradient-to-b from-white to-[#f4f3f2] pb-[2px] pl-[7px] tracking-[0.03px] text-[#3c3c3c] ${wb}`}>{b}</div>
  </div>
);
const HGrip = () => <div className="flex h-[7px] w-full shrink-0 items-center justify-center gap-[2px]"><i className="h-1 w-px bg-[#bbb8b4]" /><i className="h-1 w-px bg-[#bbb8b4]" /><i className="h-1 w-px bg-[#bbb8b4]" /></div>;
const Scroll = ({ before, thumb, dimTop = false, dimBot = false }: { before: string; thumb: string; dimTop?: boolean; dimBot?: boolean }) => (
  <div className="flex w-[13px] shrink-0 flex-col items-center overflow-hidden rounded-full border border-[#b9b6b2] bg-[#d9d7d5]">
    <div className="flex h-[12px] w-full shrink-0 items-center justify-center bg-[#f4f3f2]"><svg width="5" height="3" viewBox="0 0 5 3"><path d="M0 3h5L2.500 0z" fill={dimTop ? "#aaa" : "#555"} /></svg></div>
    <div className={`w-full shrink-0 ${before}`} />
    <div className={`flex w-full shrink-0 flex-col items-center justify-center gap-[2px] rounded-full border border-[#a7a4a0] bg-[#f7f6f5] ${thumb}`}><i className="h-px w-[5px] bg-[#999]" /><i className="h-px w-[5px] bg-[#999]" /><i className="h-px w-[5px] bg-[#999]" /></div>
    <div className="w-full flex-1" />
    <div className="flex h-[12px] w-full shrink-0 items-center justify-center bg-[#f4f3f2]"><svg width="5" height="3" viewBox="0 0 5 3"><path d="M0 0h5L2.500 3z" fill={dimBot ? "#aaa" : "#555"} /></svg></div>
  </div>
);
const Tri = ({ c }: { c: string }) => <svg width="11" height="7" viewBox="0 0 11 7" className="block shrink-0"><path d="M0 .3h11L5.500 7z" fill={c} /></svg>;
const Head = ({ children, c = "#777" }: { children: string; c?: string }) => (
  <div className="flex h-5 items-center gap-[9px] font-bold text-[#333]"><div className="pt-[3px]"><Tri c={c} /></div><span className="tracking-[-0.22px]">{children}</span></div>
);
const Check = ({ off = true }) => <i className={`block h-[14px] w-[14px] shrink-0 rounded-[3px] border ${off ? "border-[#bdbab7] bg-[#e0dfdd]" : "mb-[2px] border-[#8f8c89] bg-white"}`} />;
const Spin = () => <svg width="7" height="13" viewBox="0 0 7 13"><path d="M.5 3.500h6L3.500 0zM.5 9.500h6L3.500 13z" fill="#a5a3a1" /></svg>;
const Combo = ({ w }: { w: string }) => <div className={`flex h-[25px] items-center justify-end rounded border border-[#c9c6c3] bg-gradient-to-b from-[#f8f7f7] to-[#ecebea] pr-[5px] pt-[6px] ${w}`}><Spin /></div>;
const Btn = ({ children, tall = false }: { children: React.ReactNode; tall?: boolean }) => <div className={`ml-2 flex w-5 items-center justify-center rounded border border-[#c2bfbc] bg-[#f5f4f3] text-[#777] ${tall ? "h-[25px]" : "h-[22px]"}`}>{children}</div>;
const Eps = () => (
  <svg width="9" height="13" viewBox="0 0 9 13" fill="none"><path d="M1.500 2.300Q5 0 7 2q1.200 2.500-2.500 4Q8 6.500 7.300 9.500 6 12.500 3 12 .5 11.500 1.200 9M1.500 4Q0 2.500 2 1.500" stroke="#7c7c7c" strokeWidth="1.300" transform="translate(9 0) scale(-1 1) translate(.3 0)" /></svg>
);

const Right = () => (
  <div className="flex w-[687px] shrink-0 pl-[1px]">
    <div className="flex w-[5px] shrink-0 flex-col justify-center gap-[3px]"><i className="h-px w-1 bg-[#bbb8b4]" /><i className="h-px w-1 bg-[#bbb8b4]" /><i className="h-px w-1 bg-[#bbb8b4]" /></div>
    <div className="flex w-[681px] shrink-0 flex-col">
      <Tabs a="Items" b="Command history" wa="w-[56px]" wb="w-[136px]" />
      <Title h="h-[25px] pt-[3px]">Command history</Title>
      <div className="flex h-[124px] shrink-0 justify-between">
        <div className="w-[666px] border border-[#bcb9b5] bg-white leading-[19px] tracking-[0.07px] text-[#3c3c3c]">
          {["Label font changed", "Label text changed", "Change item position", "Change item position", "Change item size"].map((t, i) => <div key={i} className="h-[19px] pl-[3px]">{t}</div>)}
          <div className="h-[19px] border-t border-[#cfcdca] bg-gradient-to-b from-[#e9e8e6] to-[#dad8d6] pl-[3px] leading-[18px] text-[#222]">Change item size</div>
        </div>
        <Scroll before="h-[64px]" thumb="h-[34px]" dimBot />
      </div>
      <HGrip />
      <Title h="h-[24px] pt-[2px]">Item properties</Title>
      <div className="h-[21px] shrink-0 bg-[#c8c8c8] pl-[6px] font-bold leading-[21px] text-[#4a4a4a]"><span className="tracking-[-0.1px]">Label</span></div>
      <div className="flex h-[121px] shrink-0 justify-between">
        <div className="w-[666px] border border-[#bcb9b5] pl-[13px] pt-[11px]">
          <Head c="#333">Main properties</Head>
          <div className="mt-[7px] flex h-[78px] gap-[3px] pl-[17px]">
            <div className="w-[596px] border border-[#bcb9b5] bg-white pl-[4px] pt-[4px] leading-[17px] tracking-[0.14px] text-[#3c3c3c]">
              <div>Data Sources:</div><div>OpenStreetMap Contributors</div><div>GADM Administrative Boundaries</div><div>High Resolution Settlement Layer</div>
            </div>
            <Scroll before="h-0" thumb="h-[38px]" dimTop />
          </div>
        </div>
        <Scroll before="h-0" thumb="h-[34px]" dimTop />
      </div>
      <HGrip />
      <div className="-mt-px"><Tabs a="Composition" b="Atlas generation" wa="w-[103px]" wb="w-[127px]" /></div>
      <Title h="h-[25px] pt-[3px]">Atlas generation</Title>
      <div className="flex flex-1 flex-col border-l border-t border-[#bcb9b5]">
        <div className="flex h-[26px] shrink-0 items-center gap-2 pl-[15px] text-[#4c4c4c]"><Check off={false} /><span className="pb-1 tracking-[0.08px]">Generate an atlas</span></div>
        <div className="flex flex-1 flex-col border border-[#bcb9b5] pl-[11px] pt-[7px] text-[#a5a19d]">
          <div className="mt-px"><Head>Configuration</Head></div>
          <div className="mt-[7px] flex h-[25px] items-center pl-[15px]"><span className="w-[113px] pb-px tracking-[0.08px]">Coverage layer</span><Combo w="w-[520px]" /></div>
          <div className="mt-[7px] flex h-5 items-center gap-2 pl-[18px]"><Check /><span className="pb-px tracking-[0.08px] text-[#b0aca8]">Hidden coverage layer</span></div>
          <div className="mt-[8px] flex h-[25px] items-center pl-[15px]"><span className="w-[113px]">Page name</span><div className="flex h-[25px] w-[492px] justify-end rounded border border-[#c9c6c3] bg-[#eae9e7]"><div className="flex w-[26px] items-center justify-center rounded-r border-l border-[#cfccc9] bg-[#f5f4f3] pt-1"><Down c="#aaa" /></div></div><Btn tall><Eps /></Btn></div>
          <div className="mt-[8px] flex h-[25px] items-center pl-[18px]"><Check /><span className="w-[96px] pb-px pl-2 text-[#b0aca8]">Filter with</span><div className="h-[25px] w-[492px] rounded border border-[#c9c6c3] bg-[#eae9e7]" /><Btn><Eps /></Btn></div>
          <div className="mt-[8px] flex h-[25px] items-center pl-[18px]"><Check /><span className="w-[96px] pb-[2px] pl-2 text-[#b0aca8]">Sort by</span><Combo w="w-[492px]" /><Btn><svg width="8" height="6"><path d="M0 6h8L4 0z" fill="#a5a3a1" /></svg></Btn></div>
          <div className="mt-[18px]"><Head>Output</Head></div>
          <div className="mt-[4px] h-5 pl-[15px] leading-5">Output filename expression</div>
          <div className="mt-[5px] flex h-[25px] items-center pl-[16px]"><div className="h-[25px] w-[604px] rounded border border-[#c9c6c3] bg-[#eae9e7] pl-[4px] leading-[22px] tracking-[0.04px]">'output_'||@atlas_featurenumber</div><Btn><Eps /></Btn></div>
          <div className="mt-[8px] flex h-5 items-center gap-2 pl-[18px]"><Check /><span className="pb-px tracking-[0.06px] text-[#b0aca8]">Single file export when possible</span></div>
        </div>
      </div>
    </div>
  </div>
);

export default function App() {
  return (
    <div className="flex h-[1053px] w-[1856px] overflow-hidden whitespace-nowrap bg-[#f2f1f0] font-['Noto_Sans','Open_Sans',sans-serif] text-[14.3px]">
      <div className="flex w-[2px] shrink-0 flex-col bg-[#560f4b]"><div className="mt-[794px] h-[8px] bg-[#d8d0d6]" /></div>
      <div className="flex w-[1854px] shrink-0 flex-col">
        <div className="-ml-[2px]"><TopBar /></div>
        <div className="flex h-[984px] shrink-0">
          <SideBar />
          <div className="flex w-[1121px] shrink-0 flex-col border-b border-l border-t border-[#bab7b3]">
            <HRuler />
            <div className="flex h-[964px]"><VRuler /><Canvas /></div>
          </div>
          <Right />
        </div>
        <div className="flex h-[29px] shrink-0 items-center border-t border-[#d8d5d2] pl-[2px] text-[#4c4c4c]">
          <span className="w-[319px] whitespace-pre pt-[2px]">x: 283.692 mm  y: 159.104 mm  page: 1</span>
          <div className="mt-[3px] flex h-[25px] w-[98px] rounded border border-[#a9a6a2] bg-white">
            <span className="flex-1 pl-[5px] leading-[23px] tracking-[0.1px] text-[#3c3c3c]">80.5%</span>
            <div className="flex w-[25px] items-center justify-center rounded-r border-l border-[#b5b2ae] bg-[#f4f3f2] pt-1"><Down /></div>
          </div>
          <span className="pl-[7px] pt-[2px] tracking-[0.18px]">1 item selected</span>
        </div>
      </div>
    </div>
  );
}
